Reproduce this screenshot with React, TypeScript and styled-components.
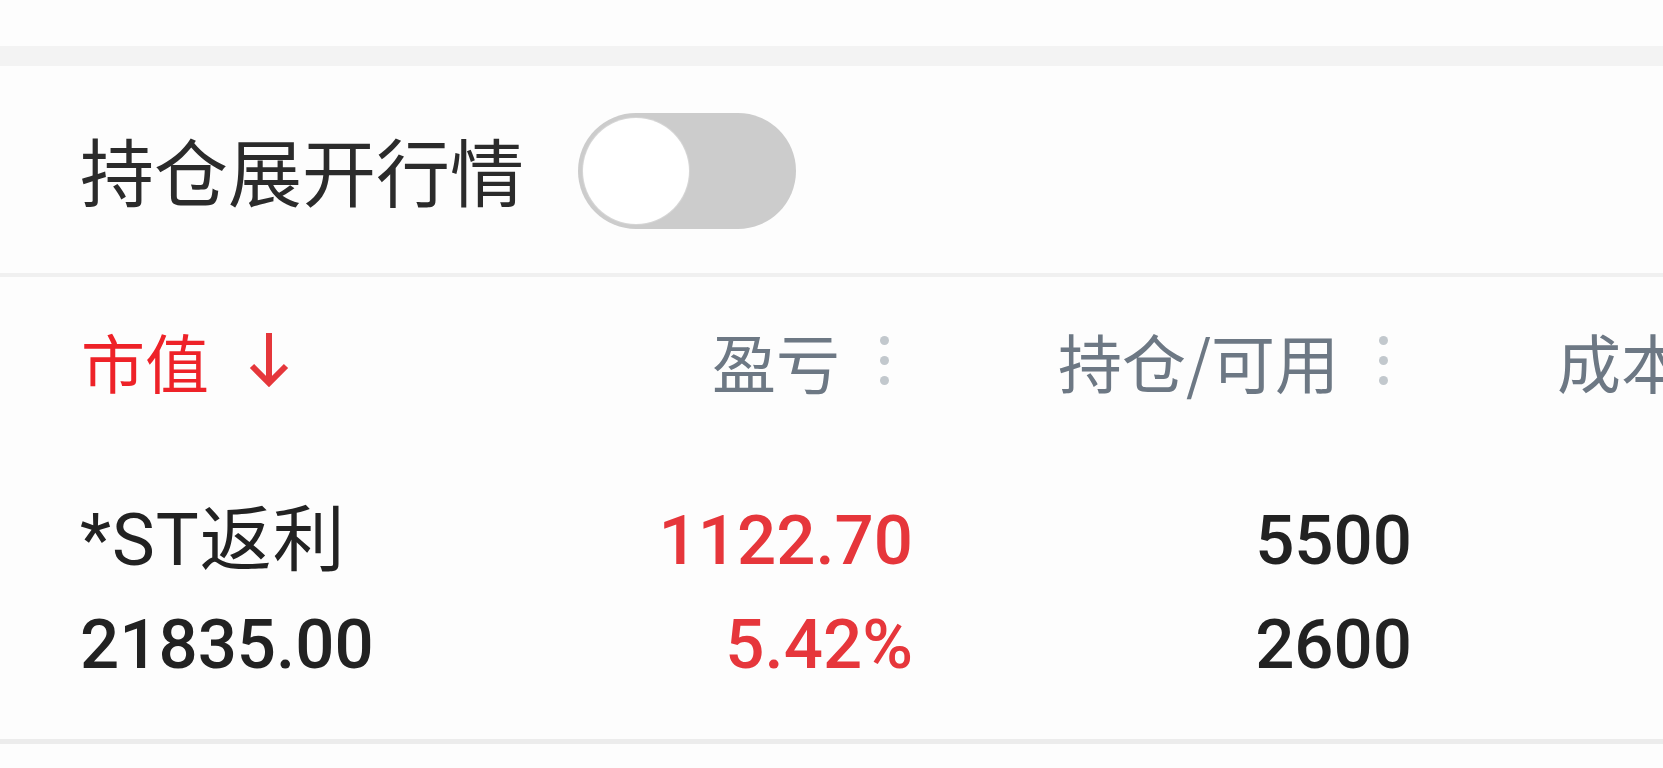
import { useState } from "react";
import styled, { createGlobalStyle } from "styled-components";

const GlobalStyle = createGlobalStyle`
  html, body {
    margin: 0;
    padding: 0;
    background: #fdfdfd;
    overflow: hidden;
  }
  body {
    font-family: Roboto, "Noto Sans CJK SC", sans-serif;
  }
`;

type Column = { key: string; title: string; sortable?: boolean };

const columns: Column[] = [
  { key: "value", title: "市值", sortable: true },
  { key: "profit", title: "盈亏" },
  { key: "hold", title: "持仓/可用" },
  { key: "cost", title: "成本/现价" },
];

const positions = [
  {
    name: "*ST返利",
    value: "21835.00",
    profit: "1122.70",
    profitRate: "5.42%",
    hold: "5500",
    usable: "2600",
  },
];

const App = () => {
  const [expanded, setExpanded] = useState(false);

  return (
    <Page>
      <GlobalStyle />
      <TopSpace />
      <Band />
      <SwitchRow>
        <SwitchLabel>持仓展开行情</SwitchLabel>
        <Track $on={expanded} onClick={() => setExpanded(!expanded)}>
          <Knob $on={expanded} />
        </Track>
      </SwitchRow>
      <Divider />
      <Table>
        <HeaderRow>
          {columns.map(col =>
            col.sortable ? (
              <SortHead key={col.key}>
                {col.title}
                <svg width="40" height="54" viewBox="0 0 40 54">
                  <path
                    d="M20 0 V50 M3 33 L20 50 L37 33"
                    fill="none"
                    stroke="#e5373b"
                    strokeWidth="6"
                  />
                </svg>
              </SortHead>
            ) : (
              <HeadCell key={col.key}>
                {col.title}
                <Dots>
                  <i />
                  <i />
                  <i />
                </Dots>
              </HeadCell>
            )
          )}
        </HeaderRow>
        {positions.map(p => (
          <DataRow key={p.name}>
            <NameCell>
              <NameLine>{p.name}</NameLine>
              <Line>{p.value}</Line>
            </NameCell>
            <NumCell $red>
              <Line>{p.profit}</Line>
              <Line>{p.profitRate}</Line>
            </NumCell>
            <NumCell>
              <Line>{p.hold}</Line>
              <Line>{p.usable}</Line>
            </NumCell>
            <NumCell />
          </DataRow>
        ))}
      </Table>
      <BottomDivider />
    </Page>
  );
};

const Page = styled.div`
  width: 100%;
  overflow: hidden;
  background: #fdfdfd;
`;

const TopSpace = styled.div`
  height: 46px;
`;

const Band = styled.div`
  height: 20px;
  background: #f3f3f3;
`;

const SwitchRow = styled.div`
  display: flex;
  align-items: center;
  height: 207px;
  padding: 3px 0 0 80px;
  box-sizing: border-box;
  gap: 54px;
`;

const SwitchLabel = styled.span`
  font-family: "Noto Sans CJK SC", sans-serif;
  font-size: 74px;
  line-height: 1;
  color: #2b2b2b;
  margin-top: -4px;
`;

const Track = styled.div<{ $on: boolean }>`
  position: relative;
  width: 218px;
  height: 116px;
  border-radius: 58px;
  background: ${p => (p.$on ? "#e5373b" : "#cccccc")};
  cursor: pointer;
  flex-shrink: 0;
  transition: background 0.2s;
`;

const Knob = styled.div<{ $on: boolean }>`
  position: absolute;
  top: 5px;
  left: ${p => (p.$on ? "106px" : "5px")};
  width: 106px;
  height: 106px;
  border-radius: 50%;
  background: #fff;
  box-shadow: 0 0 0 1px #d6d6d6;
  transition: left 0.2s;
`;

const Divider = styled.div`
  height: 4px;
  background: #f0f0f0;
`;

const Table = styled.div`
  padding: 0 0 42px 80px;
  width: max-content;
`;

const HeaderRow = styled.div`
  display: grid;
  grid-template-columns: 334px 499px 499px 499px;
  height: 166px;
  align-items: center;
  margin-bottom: 46px;
  font-family: "Noto Sans CJK SC", sans-serif;
  font-size: 64px;
  line-height: 1;
`;

const SortHead = styled.div`
  display: flex;
  align-items: center;
  gap: 40px;
  color: #ee2228;
  padding-left: 1px;
`;

const HeadCell = styled.div`
  display: flex;
  align-items: center;
  justify-content: flex-end;
  gap: 40px;
  padding-right: 24px;
  color: #6d7884;
  white-space: nowrap;
`;

const Dots = styled.span`
  display: flex;
  flex-direction: column;
  gap: 11px;

  i {
    display: block;
    width: 9px;
    height: 9px;
    border-radius: 50%;
    background: #c2c8cd;
  }
`;

const DataRow = styled.div`
  display: grid;
  grid-template-columns: 334px 499px 499px 499px;
  font-size: 69px;
  font-weight: 500;
`;

const NameCell = styled.div`
  color: #222;
`;

const NumCell = styled.div<{ $red?: boolean }>`
  text-align: right;
  color: ${p => (p.$red ? "#e6363b" : "#222")};
`;

const Line = styled.div`
  height: 104px;
  line-height: 104px;
  white-space: nowrap;
`;

const NameLine = styled(Line)`
  font-size: 72px;
  font-weight: 400;
  letter-spacing: 1px;
`;

const BottomDivider = styled.div`
  height: 5px;
  background: #ececec;
`;

export default App;
